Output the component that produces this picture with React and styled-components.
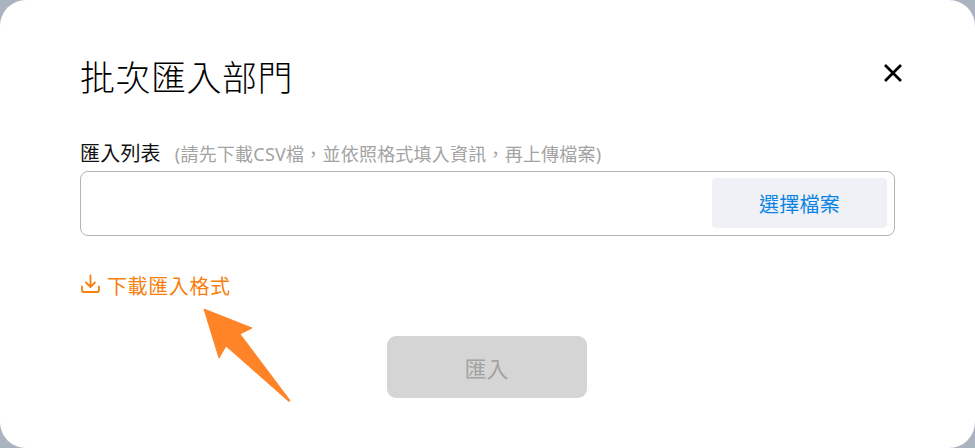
import React from "react";
import styled, { createGlobalStyle } from "styled-components";

const GlobalStyle = createGlobalStyle`
  html, body {
    margin: 0;
    padding: 0;
    background: #abb2c0;
  }
  * {
    box-sizing: border-box;
  }
`;

const Modal = styled.div`
  position: relative;
  width: 975px;
  height: 448px;
  padding: 54px 80px 0;
  background: #fff;
  border-radius: 26px;
  font-family: "Noto Sans", "Noto Sans CJK TC", sans-serif;
  overflow: hidden;
`;

const Header = styled.div`
  display: flex;
  align-items: center;
  justify-content: space-between;
  height: 48px;
`;

const Title = styled.h1`
  margin: 0;
  font-size: 35px;
  font-weight: 300;
  letter-spacing: 0.5px;
  line-height: 48px;
  color: #000;
`;

const CloseButton = styled.button`
  display: flex;
  padding: 0;
  margin: -10px -10px 0 0;
  border: 0;
  background: none;
  color: #000;
`;

const Label = styled.div`
  display: flex;
  align-items: baseline;
  height: 26px;
  margin-top: 39px;
  line-height: 26px;
`;

const LabelText = styled.span`
  font-size: 20px;
  letter-spacing: 0.2px;
  color: #111;
`;

const Hint = styled.span`
  margin-left: 14px;
  font-size: 18px;
  letter-spacing: 0.22px;
  color: #a3a3a3;
`;

const FileField = styled.div`
  display: flex;
  justify-content: flex-end;
  align-items: flex-start;
  height: 65px;
  margin-top: 4px;
  padding: 6px 7px 0;
  border: 1px solid #b3b3b3;
  border-radius: 8px;
`;

const PickButton = styled.button`
  width: 175px;
  height: 50px;
  border: 0;
  border-radius: 4px;
  background: #f0f1f6;
  color: #0a84e3;
  font: inherit;
  font-size: 20px;
  letter-spacing: 0.3px;
`;

const DownloadLink = styled.a`
  display: flex;
  align-items: center;
  gap: 6px;
  height: 28px;
  margin-top: 35px;
  color: #f77f0e;
  font-size: 20px;
  letter-spacing: 0.6px;
`;

const DownloadIcon = styled.svg`
  margin-top: -2px;
`;

const Footer = styled.div`
  display: flex;
  justify-content: center;
  margin-top: 37px;
  padding-right: 2px;
`;

const SubmitButton = styled.button`
  width: 200px;
  height: 62px;
  border: 0;
  border-radius: 9px;
  background: #d5d5d5;
  color: #a3a3a3;
  font: inherit;
  font-size: 22px;
`;

const Pointer = styled.svg`
  position: absolute;
  left: 200px;
  top: 305px;
`;

export default function App() {
  return (
    <>
      <GlobalStyle />
      <Modal>
        <Header>
          <Title>批次匯入部門</Title>
          <CloseButton>
            <svg width="24" height="24" viewBox="0 0 24 24" fill="none" stroke="currentColor" strokeWidth="2.7">
              <path d="M4 4l16 16M20 4L4 20" />
            </svg>
          </CloseButton>
        </Header>
        <Label>
          <LabelText>匯入列表</LabelText>
          <Hint>(請先下載CSV檔，並依照格式填入資訊，再上傳檔案)</Hint>
        </Label>
        <FileField>
          <PickButton>選擇檔案</PickButton>
        </FileField>
        <DownloadLink>
          <DownloadIcon width="21" height="20" viewBox="0 0 21 20" fill="none" stroke="currentColor" strokeWidth="1.8" strokeLinecap="round" strokeLinejoin="round">
            <path d="M10.500 1.500v11M6 8.500l4.500 4.500L15 8.500M2 12.500v3.500a2 2 0 0 0 2 2h13a2 2 0 0 0 2-2v-3.500" />
          </DownloadIcon>
          下載匯入格式
        </DownloadLink>
        <Footer>
          <SubmitButton disabled>匯入</SubmitButton>
        </Footer>
        <Pointer width="95" height="100" viewBox="0 0 95 100">
          <path
            d="M4 4L52 23L40 29L90 95.500L89 96.500L26 41L19 53Z"
            fill="#ff8427"
            stroke="#ff8427"
            strokeWidth="1"
            strokeLinejoin="round"
          />
        </Pointer>
      </Modal>
    </>
  );
}
